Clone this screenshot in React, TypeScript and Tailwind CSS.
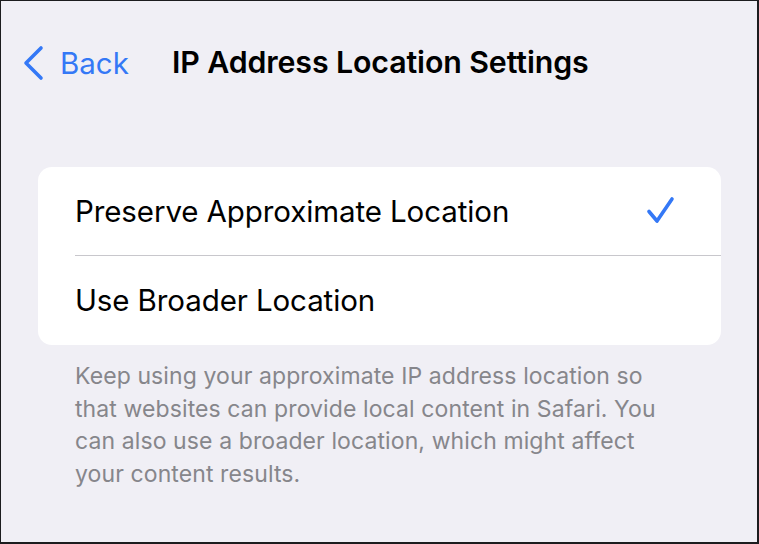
import React from 'react';

const options = [
  { label: 'Preserve Approximate Location', selected: true },
  { label: 'Use Broader Location', selected: false },
];

function ChevronLeft() {
  return (
    <svg width="24" height="36" viewBox="0 0 24 36" fill="none" className="shrink-0">
      <path d="M19 3 L4 18 L19 33" stroke="#3478f6" strokeWidth="3.6" strokeLinecap="round" strokeLinejoin="round" />
    </svg>
  );
}

function Checkmark() {
  return (
    <svg width="32" height="30" viewBox="0 0 32 30" fill="none" className="shrink-0">
      <path d="M4 15.5 L12 25 L27 3" stroke="#3478f6" strokeWidth="3.6" strokeLinecap="round" strokeLinejoin="round" />
    </svg>
  );
}

export default function App() {
  return (
    <div
      className="w-[759px] h-[544px] bg-[#f0eff5] border-t border-l border-r-2 border-b-2 border-[#1c1c1e] overflow-hidden"
      style={{ fontFamily: 'Inter, "Noto Sans", sans-serif' }}
    >
      <div className="h-[122px] flex items-start pt-[43px]">
        <div className="flex items-center pl-[21px] gap-[14px] h-[38px]">
          <ChevronLeft />
          <span className="text-[29.5px] text-[#3478f6]">Back</span>
        </div>
        <h1 className="ml-[43px] h-[38px] flex items-center text-[30.3px] font-semibold text-black tracking-[-0.1px]">
          IP Address Location Settings
        </h1>
      </div>

      <div className="pt-[44px] px-[37px] pr-[36px]">
        <div className="bg-white rounded-[14px] overflow-hidden">
          {options.map((opt, i) => (
            <div key={opt.label} className="pl-[37px]">
              <div
                className={`flex items-center justify-between pr-[44px] h-[89px] ${
                  i < options.length - 1 ? 'border-b border-[#c8c7cc]' : ''
                }`}
              >
                <span className="text-[29.5px] text-black tracking-[-0.1px]">{opt.label}</span>
                {opt.selected && <Checkmark />}
              </div>
            </div>
          ))}
        </div>
      </div>

      <p className="mt-[15px] pl-[74px] pr-[90px] text-[23px] leading-[32.7px] text-[#86868b] tracking-[0.1px]">
        Keep using your approximate IP address location so that websites can provide local content in Safari. You can also use a broader location, which might affect your content results.
      </p>
    </div>
  );
}
